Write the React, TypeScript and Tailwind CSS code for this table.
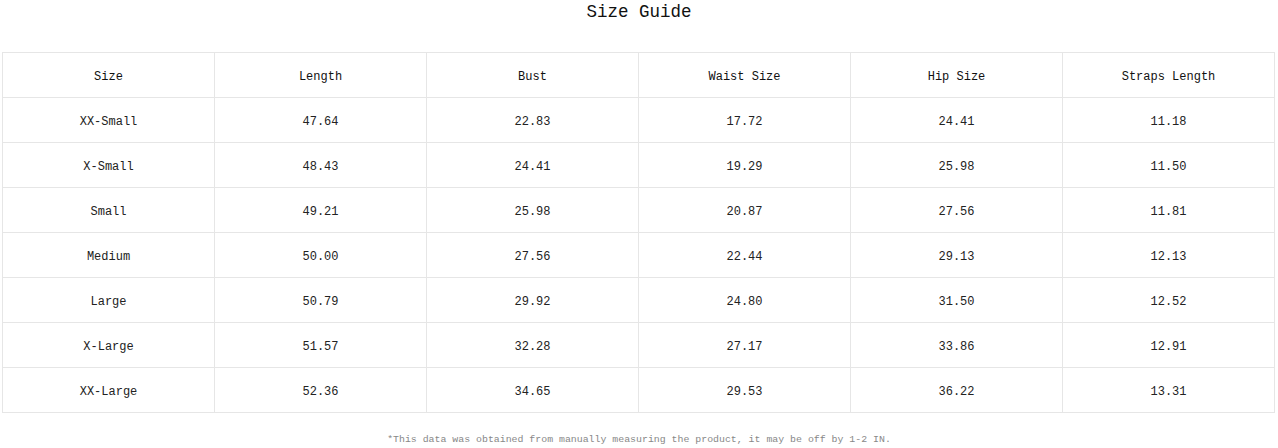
const headers = ['Size', 'Length', 'Bust', 'Waist Size', 'Hip Size', 'Straps Length']

const rows = [
  ['XX-Small', '47.64', '22.83', '17.72', '24.41', '11.18'],
  ['X-Small', '48.43', '24.41', '19.29', '25.98', '11.50'],
  ['Small', '49.21', '25.98', '20.87', '27.56', '11.81'],
  ['Medium', '50.00', '27.56', '22.44', '29.13', '12.13'],
  ['Large', '50.79', '29.92', '24.80', '31.50', '12.52'],
  ['X-Large', '51.57', '32.28', '27.17', '33.86', '12.91'],
  ['XX-Large', '52.36', '34.65', '29.53', '36.22', '13.31'],
]

export default function App() {
  return (
    <main className="h-[448px] w-[1278px] overflow-hidden bg-white font-['Liberation_Mono',monospace] text-[#222]">
      <h2 className="pt-px text-center text-[17.5px] leading-[22px] text-[#111]">Size Guide</h2>

      <table className="ml-[2px] mt-[29px] w-[1273px] table-fixed border-collapse">
        <thead>
          <tr className="h-[45px]">
            {headers.map((h) => (
              <th key={h} className="border border-[#e6e6e6] pt-[4px] text-center text-[12px] font-normal text-[#111]">
                {h}
              </th>
            ))}
          </tr>
        </thead>
        <tbody>
          {rows.map((row) => (
            <tr key={row[0]} className="h-[45px]">
              {row.map((cell, i) => (
                <td key={i} className="border border-[#e6e6e6] pt-[4px] text-center text-[12px]">
                  {cell}
                </td>
              ))}
            </tr>
          ))}
        </tbody>
      </table>

      <p className="mt-[21px] text-center text-[9.9px] leading-[12px] text-[#888]">
        *This data was obtained from manually measuring the product, it may be off by 1-2 IN.
      </p>
    </main>
  )
}
